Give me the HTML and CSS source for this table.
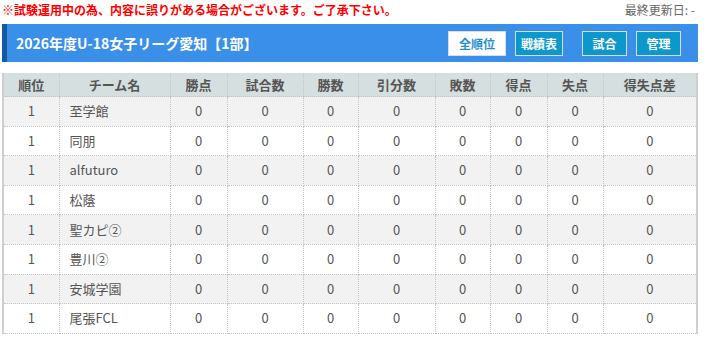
FILE: index.html
```html
<!DOCTYPE html>
<html lang="ja">
<head>
<meta charset="utf-8">
<link rel="stylesheet" href="styles.css">
</head>
<body>
<div class="page">
  <div class="topline">
    <span class="notice">※試験運用中の為、内容に誤りがある場合がございます。ご了承下さい。</span>
    <span class="updated">最終更新日: -</span>
  </div>
  <div class="titlebar">
    <h1 class="title">2026年度U-18女子リーグ愛知【1部】</h1>
    <div class="btns">
      <span class="btn btn-active">全順位</span>
      <span class="btn btn-wide">戦績表</span>
      <span class="btn">試合</span>
      <span class="btn">管理</span>
    </div>
  </div>
  <table class="standings">
    <colgroup>
      <col style="width:56px"><col style="width:111px"><col style="width:57px"><col style="width:76px"><col style="width:55px"><col style="width:77px"><col style="width:55px"><col style="width:57px"><col style="width:56px"><col>
    </colgroup>
    <thead>
      <tr><th>順位</th><th>チーム名</th><th>勝点</th><th>試合数</th><th>勝数</th><th>引分数</th><th>敗数</th><th>得点</th><th>失点</th><th>得失点差</th></tr>
    </thead>
    <tbody>
      <tr><td>1</td><td class="team">至学館</td><td>0</td><td>0</td><td>0</td><td>0</td><td>0</td><td>0</td><td>0</td><td>0</td></tr>
      <tr><td>1</td><td class="team">同朋</td><td>0</td><td>0</td><td>0</td><td>0</td><td>0</td><td>0</td><td>0</td><td>0</td></tr>
      <tr><td>1</td><td class="team">alfuturo</td><td>0</td><td>0</td><td>0</td><td>0</td><td>0</td><td>0</td><td>0</td><td>0</td></tr>
      <tr><td>1</td><td class="team">松蔭</td><td>0</td><td>0</td><td>0</td><td>0</td><td>0</td><td>0</td><td>0</td><td>0</td></tr>
      <tr><td>1</td><td class="team">聖カピ②</td><td>0</td><td>0</td><td>0</td><td>0</td><td>0</td><td>0</td><td>0</td><td>0</td></tr>
      <tr><td>1</td><td class="team">豊川②</td><td>0</td><td>0</td><td>0</td><td>0</td><td>0</td><td>0</td><td>0</td><td>0</td></tr>
      <tr><td>1</td><td class="team">安城学園</td><td>0</td><td>0</td><td>0</td><td>0</td><td>0</td><td>0</td><td>0</td><td>0</td></tr>
      <tr><td>1</td><td class="team">尾張FCL</td><td>0</td><td>0</td><td>0</td><td>0</td><td>0</td><td>0</td><td>0</td><td>0</td></tr>
    </tbody>
  </table>
</div>
</body>
</html>
```
FILE: styles.css
```css
html, body {
  margin: 0;
  padding: 0;
  background: #fff;
}
body {
  font-family: "Noto Sans CJK JP", "Noto Sans", sans-serif;
  color: #555;
}
.page {
  width: 696px;
  margin-left: 2px;
}
.topline {
  display: flex;
  justify-content: space-between;
  align-items: center;
  height: 20px;
  font-size: 12px;
  line-height: 20px;
}
.notice {
  color: #f00;
  font-weight: bold;
}
.updated {
  color: #666;
  margin-right: 3px;
}
.titlebar {
  margin-top: 4px;
  height: 38px;
  background: #3a90e8;
  border-left: 5px solid #1459a3;
  display: flex;
  align-items: center;
  justify-content: space-between;
  box-sizing: border-box;
  padding: 0 17px 0 9px;
}
.title {
  margin: 0;
  font-size: 14px;
  font-weight: bold;
  color: #fff;
}
.btns {
  display: flex;
  align-items: center;
}
.btn {
  box-sizing: border-box;
  height: 25px;
  width: 45px;
  border: 1px solid #d8dde2;
  background: #0c98cb;
  color: #fff;
  font-size: 12px;
  font-weight: bold;
  display: flex;
  align-items: center;
  justify-content: center;
  margin-left: 9px;
}
.btn-active {
  width: 58px;
  background: #fff;
  color: #1f8fd0;
  margin-left: 0;
}
.btn-wide {
  width: 48px;
  margin-right: 10px;
}
.standings {
  margin-top: 11px;
  width: 696px;
  border-collapse: collapse;
  table-layout: fixed;
  border-left: 2px solid #cfcfcf;
  border-right: 2px solid #cfcfcf;
  font-size: 13px;
  line-height: 16px;
}
.standings th {
  background: #d5dfe0;
  color: #555;
  font-weight: bold;
  font-size: 13px;
  height: 22px;
  padding: 0;
  border: 1px dotted #c4c4c4;
  border-top: 1px solid #d5dfe0;
}
.standings td {
  height: 28.6px;
  padding: 0;
  text-align: center;
  border: 1px dotted #c4c4c4;
  color: #555;
}
.standings td.team {
  text-align: left;
  padding-left: 10px;
}
.standings tbody tr:nth-child(odd) td {
  background: #f2f2f2;
}
```
